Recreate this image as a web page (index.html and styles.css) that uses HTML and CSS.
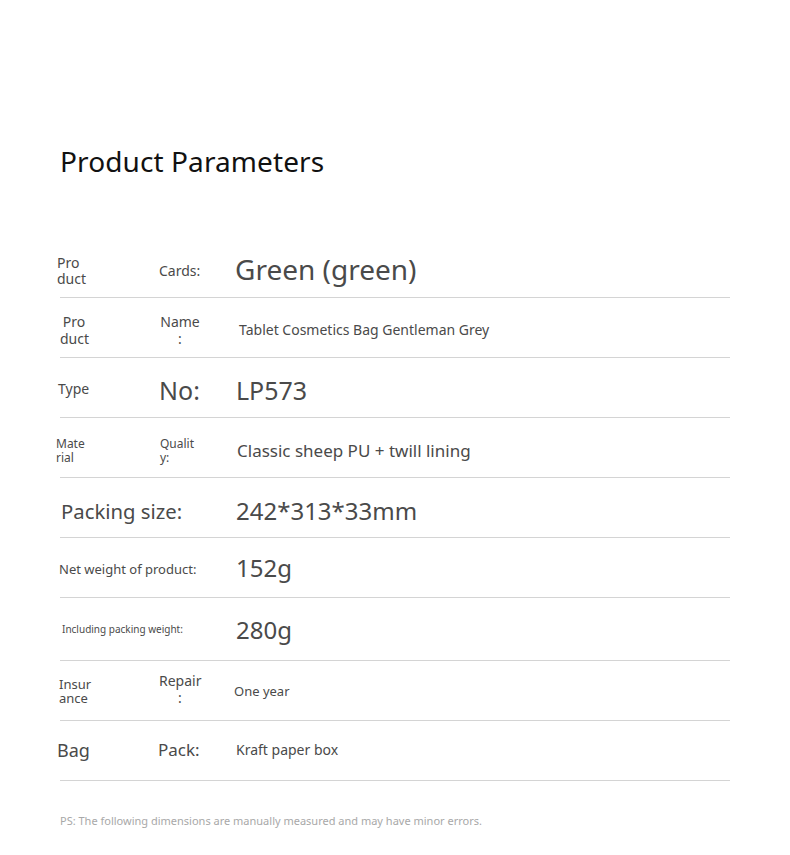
FILE: index.html
```html
<!DOCTYPE html>
<html>
<head>
<meta charset="utf-8">
<link rel="stylesheet" href="styles.css">
</head>
<body>
<div class="page">
  <h1 class="title">Product Parameters</h1>
  <div class="table">
    <div class="row p6">
      <div class="c1 s14 off-3 lh16">Pro<br>duct</div>
      <div class="c2 s14">Cards:</div>
      <div class="c3 s28 off-1 up2">Green (green)</div>
    </div>
    <div class="row p4">
      <div class="c1 s14 center w30 lh17">Pro<br>duct</div>
      <div class="c2 s14 center w40 lh17">Name<br>:</div>
      <div class="c3 s14 off3">Tablet Cosmetics Bag Gentleman Grey</div>
    </div>
    <div class="row p2">
      <div class="c1 s14 off-2">Type</div>
      <div class="c2 s24 down1">No:</div>
      <div class="c3 s24 down1">LP573</div>
    </div>
    <div class="row p6">
      <div class="c1 s12 off-4">Mate<br>rial</div>
      <div class="c2 s12 off1">Qualit<br>y:</div>
      <div class="c3 s17 off1">Classic sheep PU + twill lining</div>
    </div>
    <div class="row p6">
      <div class="wide s20 off1">Packing size:</div>
      <div class="c3 s25">242*313*33mm</div>
    </div>
    <div class="row p2">
      <div class="wide s13 off-1">Net weight of product:</div>
      <div class="c3 s25 up1">152g</div>
    </div>
    <div class="row tall">
      <div class="wide s10 off2">Including packing weight:</div>
      <div class="c3 s25">280g</div>
    </div>
    <div class="row">
      <div class="c1 s13 off-1">Insur<br>ance</div>
      <div class="c2 s14 center w42 lh17 up2">Repair<br>:</div>
      <div class="c3 s13 off-2">One year</div>
    </div>
    <div class="row pb2">
      <div class="c1 s18 off-3">Bag</div>
      <div class="c2 s17 off-1">Pack:</div>
      <div class="c3 s14">Kraft paper box</div>
    </div>
  </div>
  <p class="note">PS: The following dimensions are manually measured and may have minor errors.</p>
</div>
</body>
</html>
```
FILE: styles.css
```css
html, body {
  margin: 0;
  padding: 0;
  background: #ffffff;
}
body {
  font-family: "Noto Sans", "Open Sans", sans-serif;
  color: #4a4a4a;
}
.page {
  padding: 0 60px;
  width: 670px;
}
.title {
  margin: 0;
  padding-top: 141px;
  font-size: 28px;
  font-weight: 400;
  line-height: 40px;
  color: #111111;
  letter-spacing: 0.1px;
}
.table {
  margin-top: 57px;
}
.row {
  display: flex;
  align-items: center;
  box-sizing: border-box;
  height: 60px;
  border-bottom: 1px solid #d4d4d4;
}
.row.tall {
  height: 63px;
}
.p2 { padding-top: 2px; }
.p4 { padding-top: 4px; }
.p6 { padding-top: 6px; }
.pb2 { padding-bottom: 2px; }
.c1, .c2, .wide {
  flex: none;
  line-height: 16px;
  margin-left: var(--o, 0px);
}
.c1 { width: calc(99px - var(--o, 0px)); }
.c2 { width: calc(77px - var(--o, 0px)); }
.wide { width: calc(176px - var(--o, 0px)); }
.c3 {
  flex: 1;
  white-space: nowrap;
  margin-left: var(--o, 0px);
}
.center {
  text-align: center;
}
.c1.w30 { width: 28px; margin-right: 71px; }
.c2.w40 { width: 42px; margin-right: 35px; }
.c2.w42 { width: 42px; margin-right: 35px; }
.lh16 { line-height: 16px; }
.lh17 { line-height: 17px; }
.up2 { position: relative; top: -2px; }
.up1 { position: relative; top: -1px; }
.down1 { position: relative; top: 1px; }
.s10 { font-size: 10px; }
.s12 { font-size: 12px; line-height: 14px; }
.s13 { font-size: 13px; line-height: 14px; }
.s14 { font-size: 14px; }
.s17 { font-size: 17px; }
.s18 { font-size: 18px; }
.s20 { font-size: 20.3px; }
.s24 { font-size: 25px; }
.s25 { font-size: 24px; }
.s28 { font-size: 28px; }
.off-4 { --o: -4px; }
.off-3 { --o: -3px; }
.off-2 { --o: -2px; }
.off-1 { --o: -1px; }
.off1 { --o: 1px; }
.off2 { --o: 2px; }
.off3 { --o: 3px; }
.note {
  margin: 32px 0 0 0;
  font-size: 11px;
  color: #a8a8a8;
}
```
